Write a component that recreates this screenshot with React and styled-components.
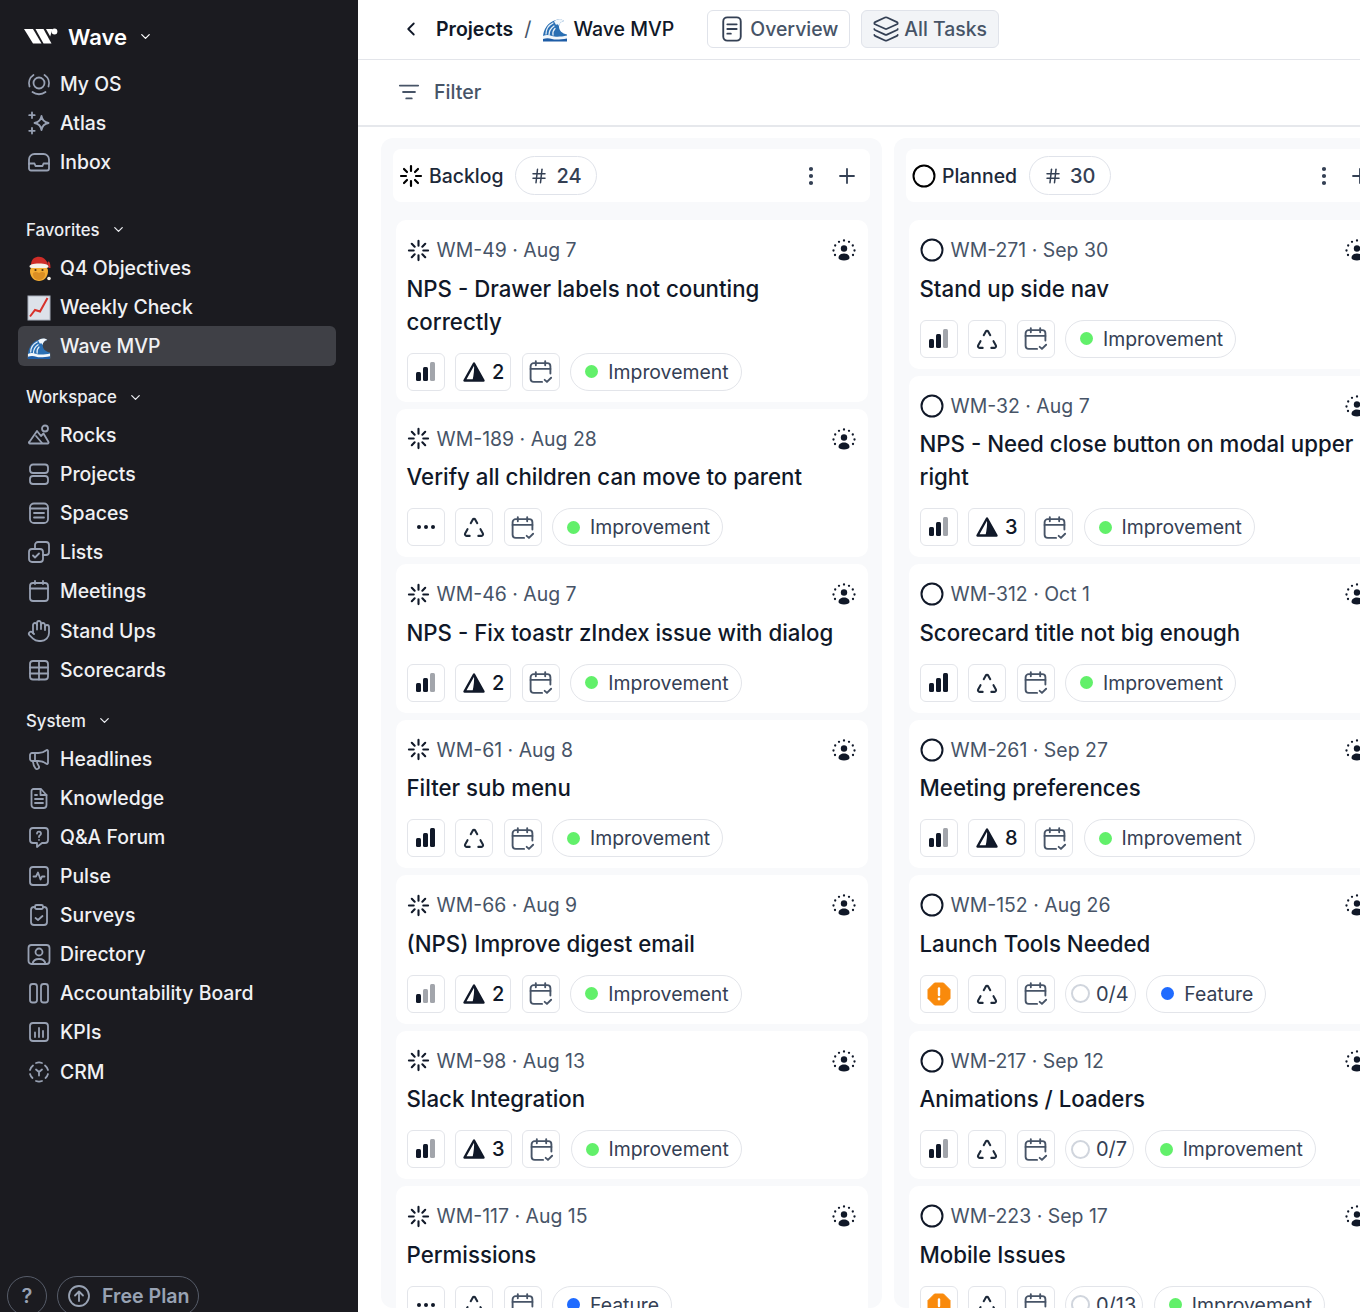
import React from "react";
import styled, { createGlobalStyle } from "styled-components";
import { ChevronDown, ChevronLeft, Plus, Hash, Layers, EllipsisVertical, Hand, Megaphone } from "lucide-react";

const Global = createGlobalStyle`
	html, body { margin: 0; padding: 0; background: #fff; }
	body { font-family: Inter, "Liberation Sans", sans-serif; }
	* { box-sizing: border-box; }
`

const Page = styled.div`
	display: flex;
	width: 1360px;
	height: 1312px;
	overflow: hidden;
	background: #fff;
`

const Sidebar = styled.aside`
	flex: none;
	width: 358px;
	height: 1312px;
	background: #1b1b20;
	display: flex;
	flex-direction: column;
	padding: 17px 22px 0 18px;
	color: #f0f1f4;
`

const Brand = styled.div`
	display: flex;
	align-items: center;
	height: 39px;
	padding-left: 6px;
	font-size: 22px;
	font-weight: 600;
	color: #fff;
	margin-bottom: 8px;
	span { margin: 0 11px 0 10px; }
`

const NavGroup = styled.div`
	display: flex;
	flex-direction: column;
	margin-bottom: ${props => props.$gap || 0}px;
`

const SectionLabel = styled.div`
	display: flex;
	align-items: center;
	height: 37px;
	gap: 11px;
	padding-left: 8px;
	font-size: 16.800px;
	font-weight: 500;
	color: #eceef2;
`

const NavRow = styled.div`
	display: flex;
	align-items: center;
	height: 39.100px;
	padding-left: 9px;
	gap: 9px;
	font-size: 19.400px;
	font-weight: 500;
	border-radius: 6px;
	background: ${props => props.$active ? "#3f4046" : "transparent"};
`

const NavIcon = styled.span`
	flex: none;
	width: 24px;
	height: 24px;
	display: flex;
	color: #98a1b3;
`

const Footer = styled.div`
	margin: auto 0 -4px -11px;
	display: flex;
	gap: 10px;
`

const HelpPill = styled.div`
	width: 40px;
	height: 40px;
	border-radius: 20px;
	border: 1px solid #565c69;
	color: #98a2b3;
	font-size: 20px;
	font-weight: 600;
	display: flex;
	align-items: center;
	justify-content: center;
`

const PlanPill = styled.div`
	width: 142px;
	height: 40px;
	border-radius: 20px;
	border: 1px solid #565c69;
	color: #98a2b3;
	font-size: 19.600px;
	font-weight: 600;
	display: flex;
	align-items: center;
	gap: 11px;
	padding-left: 9px;
`

const Main = styled.main`
	flex: 1;
	min-width: 0;
	display: flex;
	flex-direction: column;
`

const TopBar = styled.header`
	flex: none;
	height: 60px;
	display: flex;
	align-items: center;
	padding: 0 0 2px 42px;
	border-bottom: 1px solid #e3e5ea;
`

const Crumb = styled.span`
	font-size: 19.500px;
	font-weight: ${props => props.$bold ? 600 : 500};
	color: #101828;
	margin-left: ${props => props.$ml}px;
`

const CrumbSep = styled.span`
	font-size: 20px;
	color: #475467;
	margin: 0 11px;
`

const TabButton = styled.div`
	height: 38px;
	width: ${props => props.$w}px;
	margin-left: ${props => props.$ml}px;
	display: flex;
	align-items: center;
	gap: ${props => props.$gap}px;
	padding-left: ${props => props.$pl}px;
	border: 1px solid #e0e3ea;
	border-radius: 6px;
	background: ${props => props.$active ? "#f2f4f7" : "#fff"};
	color: #475467;
	font-size: 19.400px;
	font-weight: 500;
`

const FilterBar = styled.div`
	flex: none;
	height: 67px;
	display: flex;
	align-items: center;
	gap: 14px;
	padding: 0 0 2px 40px;
	border-bottom: 2px solid #e6e8ec;
	color: #475467;
	font-size: 19.600px;
	font-weight: 500;
`

const Board = styled.div`
	flex: none;
	height: 1170px;
	margin-top: 11px;
	padding-left: 23px;
	display: flex;
	gap: 12px;
	overflow: hidden;
`

const Column = styled.section`
	flex: none;
	width: 501px;
	padding: 11px 12px 0;
	border-radius: 12px;
	background: #f8f9fb;
	display: flex;
	flex-direction: column;
	overflow: hidden;
`

const ColumnHead = styled.div`
	flex: none;
	height: 53px;
	margin-bottom: 18px;
	display: flex;
	align-items: center;
	padding: 0 11px 0 6px;
	background: #fff;
	border-radius: 8px;
`

const ColumnTitle = styled.span`
	margin-left: 6px;
	font-size: 19.400px;
	font-weight: 500;
	color: #1d2939;
`

const CountPill = styled.div`
	margin-left: 12px;
	height: 39px;
	padding: 0 14px;
	display: flex;
	align-items: center;
	gap: 8px;
	border: 1px solid #e0e3ea;
	border-radius: 20px;
	font-size: 20px;
	font-weight: 500;
	color: #344054;
`

const HeadActions = styled.div`
	margin-left: auto;
	display: flex;
	align-items: center;
	gap: 12px;
	color: #344054;
`

const Card = styled.article`
	flex: none;
	margin: 0 2px 7px 3px;
	padding: 18px 12px 11px 10.500px;
	background: #fff;
	border-radius: 10px;
`

const Meta = styled.div`
	display: flex;
	align-items: center;
	height: 24px;
	font-size: 19.450px;
	color: #475467;
	span { margin-left: 7px; }
`

const StatusSlot = styled.div`
	display: flex;
	color: #101828;
`

const AvatarSlot = styled.div`
	margin-left: auto;
	display: flex;
`

const Title = styled.h3`
	margin: 9.500px 0 15px;
	font-size: 22.250px;
	line-height: 33px;
	font-weight: 500;
	color: #101828;
`

const Chips = styled.div`
	display: flex;
	align-items: center;
	gap: 10.500px;
`

const Chip = styled.div`
	flex: none;
	height: 38px;
	min-width: 38px;
	padding: 0 ${props => props.$wide ? 6 : 0}px;
	display: flex;
	align-items: center;
	justify-content: center;
	gap: 6px;
	border: 1px solid #e3e5ea;
	border-radius: 6px;
	background: #fff;
	font-size: 20px;
	font-weight: 500;
	color: #101828;
`

const Pill = styled.div`
	flex: none;
	height: 38px;
	display: flex;
	align-items: center;
	gap: ${props => props.$gap}px;
	padding: 0 ${props => props.$pr}px 0 ${props => props.$pl}px;
	border: 1px solid #e3e5ea;
	border-radius: 19px;
	background: #fff;
	font-size: ${props => props.$size}px;
	color: #344054;
`

const Dot = styled.i`
	width: 13px;
	height: 13px;
	border-radius: 50%;
	background: ${props => props.$color};
`

const Ring = styled.i`
	width: 19px;
	height: 19px;
	border-radius: 50%;
	border: 2.500px solid #d0d5dd;
`

const IconTint = styled.span`
	display: flex;
	color: ${props => props.$color};
`

const Svg = ({ size = 24, view = 24, fill = "none", width = 1.8, children }) => (
	<svg width={size} height={size} viewBox={`0 0 ${view} ${view}`} fill={fill} stroke="currentColor" strokeWidth={width} strokeLinecap="round" strokeLinejoin="round">
		{children}
	</svg>
)

const navIcons = {
	os: <Svg><circle cx="12" cy="11" r="5.500" /><path d="M2.500 14.500A10 10 0 0 1 6.500 3M21.500 14.500A10 10 0 0 0 17.500 3M5.500 20a10.500 10.500 0 0 0 13 0" /></Svg>,
	atlas: <Svg><path d="M14.500 5c.6 4.200 2.500 6.200 7 7-4.500.8-6.400 2.800-7 7-.6-4.200-2.500-6.200-7-7 4.500-.8 6.400-2.800 7-7Z" /><path d="M5 1.500v5.500M2.200 4.200h5.500M5 17v5.500M2.200 19.800h5.500" /></Svg>,
	inbox: <Svg><path d="M2 14V9.500a5.500 5.500 0 0 1 5.500-5.500h9A5.500 5.500 0 0 1 22 9.500V14" /><path d="M2 13.500h5.500l1 2.500h7l1-2.500H22v5a2 2 0 0 1-2 2H4a2 2 0 0 1-2-2v-5Z" /></Svg>,
	rocks: <Svg><circle cx="18" cy="5.500" r="3" /><path d="M2 19.500 10 8l4 5 2.500-2.500 5 8.500a1 1 0 0 1-1 1.500H3a1 1 0 0 1-1-1.500Z" /><path d="M9 13l6 7" /></Svg>,
	projects: <Svg><rect x="3" y="2.500" width="18" height="8.500" rx="3" /><rect x="3" y="14" width="18" height="8" rx="3" /></Svg>,
	spaces: <Svg><rect x="3" y="2.500" width="18" height="19.500" rx="4" /><path d="M3 7.500h18M7 12h10M7 16.500h10" /></Svg>,
	lists: <Svg><rect x="2" y="9" width="14" height="13" rx="3" /><path d="M8 9V5a3 3 0 0 1 3-3h8a3 3 0 0 1 3 3v7a3 3 0 0 1-3 3h-3" /><path d="m6 15.500 2 2 4-4" /></Svg>,
	meetings: <Svg><rect x="3" y="4" width="18" height="18" rx="3" /><path d="M3 9.500h18M8 2v3M16 2v3" /></Svg>,
	hand: <Hand size={24} strokeWidth={1.8} />,
	scorecards: <Svg><rect x="3" y="3" width="18" height="18.500" rx="3" /><path d="M3 9.500h18M3 15.500h18M12 3v18.500" /></Svg>,
	headlines: <Megaphone size={24} strokeWidth={1.8} />,
	knowledge: <Svg><path d="M6.500 3H14l5.500 6v10a3 3 0 0 1-3 3h-9a3 3 0 0 1-3-3V5a2 2 0 0 1 2-2Z" /><path d="M13.500 3v6h6M8 13h8M8 17h8M8 9h2" /></Svg>,
	forum: <Svg><path d="M6 3h12a3 3 0 0 1 3 3v9a3 3 0 0 1-3 3h-3l-5 4v-4H6a3 3 0 0 1-3-3V6a3 3 0 0 1 3-3Z" /><path d="M10 8.500a2 2 0 1 1 3 1.800c-.7.4-1 .9-1 1.700M12 14.800v.1" /></Svg>,
	pulse: <Svg><rect x="3" y="3" width="18" height="18" rx="3" /><path d="M6.500 12.500H9l2-4 2.500 7 1.500-3h2.500" /></Svg>,
	surveys: <Svg><rect x="8" y="2" width="8" height="4" rx="1.500" /><path d="M8 4H7a3 3 0 0 0-3 3v12a3 3 0 0 0 3 3h10a3 3 0 0 0 3-3V7a3 3 0 0 0-3-3h-1" /><path d="m8.500 15 2.500 2 4.500-4" /></Svg>,
	directory: <Svg><rect x="1.500" y="3" width="21" height="19" rx="3" /><circle cx="12" cy="10" r="3.500" /><path d="M5.500 22c.5-3.500 3-5 6.500-5s6 1.500 6.500 5" /></Svg>,
	board: <Svg><rect x="3" y="3" width="7" height="18.500" rx="2.500" /><rect x="14" y="3" width="7" height="18.500" rx="2.500" /></Svg>,
	kpis: <Svg><rect x="3" y="3" width="18" height="18" rx="3" /><path d="M8 12.500V17M12 8v9M16 11v6" /></Svg>,
	crm: <Svg><path d="M9 3a9 9 0 0 1 6 0M18 5.500a9 9 0 0 1 3 4.500M21 14a9 9 0 0 1-2.500 4M15 21a9 9 0 0 1-6 0M5.500 18A9 9 0 0 1 3 14M3 10a9 9 0 0 1 3-4.500" /><path d="m9 9.500 3 2.500 3-2.500M12 12v3.500" /></Svg>,
}

const WaveLogo = () => (
	<svg width="34" height="17" viewBox="0 0 34 17" fill="#fff">
		<path d="M0 1h9l8.500 14.500H9Z" />
		<path d="M11.500 1h8l8 14.500h-8Z" />
		<path d="M22 1h6.500l-2.300 7.500Z" />
		<circle cx="30.500" cy="3.500" r="2.900" />
	</svg>
)

const WaveEmoji = ({ size = 26 }) => (
	<svg width={size} height={size} viewBox="0 0 26 26">
		<path d="M1 22c0-9 5-16 13-18 3-.8 6-.5 8 1-3 .5-5 2.500-5 5.500 0 4 3 7 8 8v6H1Z" fill="#2a6fb3" />
		<path d="M12 5.500c3-2.500 7-3 10-.5-3 .5-5 2.500-5 5.500-.4-2-2-3-3-1.500-.6-1.500-1.500-2.500-2-3.500Z" fill="#f2f7fb" />
		<path d="M4 18c0-5 3-9 7-11M7 19c0-4 2-7 5-9M11 19c-.5-3 .5-5 2-6.500" stroke="#e8f1f9" strokeWidth="1.300" fill="none" strokeLinecap="round" />
		<path d="M1 20c3-1.500 6-1 9 0s9 1 15-.5V25H1Z" fill="#f2f7fb" />
		<path d="M1 23c3-1 6-1 9 0s9 .5 15-.5V25.500H1Z" fill="#1e5da6" />
	</svg>
)

const SantaEmoji = () => (
	<svg width="24" height="26" viewBox="0 0 24 26">
		<path d="M3 15c0-4 4-6 9-6s9 2 9 6c0 6-4 10-9 10s-9-4-9-10Z" fill="#f5ae34" />
		<path d="M4 9C4 3 8 .8 12 .8S20 4 21 9Z" fill="#cf2d28" />
		<path d="M21 6c1.500 1.500 1.500 3 1.500 6" stroke="#cf2d28" strokeWidth="2" fill="none" />
		<path d="M2.500 10.500C2.500 8.500 6 7.500 12 7.500s9.500 1 9.500 3-3 1.500-9.500 1.500-9.500.5-9.500-1.500Z" fill="#f6f1e7" />
		<path d="M6 17c2-1.500 4-1 6 0 2-1 4-1.500 6 0 .5 4-2 7-6 7s-6.500-3-6-7Z" fill="#db8f24" />
		<circle cx="8.500" cy="14" r="1.100" fill="#4f3212" />
		<circle cx="15.500" cy="14" r="1.100" fill="#4f3212" />
		<circle cx="22" cy="22.500" r="1.800" fill="#f6f1e7" />
	</svg>
)

const ChartEmoji = () => (
	<svg width="24" height="26" viewBox="0 0 24 26">
		<rect x="1" y="1" width="22" height="24" fill="#dde2ea" stroke="#a9b0bb" strokeWidth="1" />
		<path d="M3 21.500 8 15l5 1.500L20.500 3" stroke="#d8322b" strokeWidth="2" fill="none" />
	</svg>
)

const Spinner = ({ size = 24 }) => (
	<Svg size={size} width={2.200}>
		<path d="M12 2v5M12 17v5M2 12h5M17 12h5M5 5l3 3M16 16l3 3M5 19l3-3M16 8l3-3" />
	</Svg>
)

const StatusIcon = ({ open }) => open
	? <Svg size={24} width={2}><circle cx="12" cy="12" r="10.500" /></Svg>
	: <Spinner size={23} />

const Avatar = () => (
	<svg width="24" height="24" viewBox="0 0 24 24" fill="#101828">
		<circle cx="12" cy="10.500" r="3.200" />
		<path d="M6.500 20c0-3 2.500-4.500 5.500-4.500s5.500 1.500 5.500 4.500c0 1.500-2.500 2.500-5.500 2.500s-5.500-1-5.500-2.500Z" />
		{[[12, 2.500], [7, 3.800], [17, 3.800], [3.200, 7.500], [20.800, 7.500], [1.500, 12.500], [22.500, 12.500], [3, 17], [21, 17]].map(([cx, cy]) => (
			<circle key={`${cx}-${cy}`} cx={cx} cy={cy} r="1.150" />
		))}
	</svg>
)

const Bars = ({ level }) => (
	<svg width="20" height="20" viewBox="0 0 20 20">
		{[[0, 10, 9], [7, 5, 14], [14, 0, 19]].map(([x, y, h], i) => (
			<rect key={x} x={x} y={y} width="5" height={h} rx="1.500" fill={i < level ? "#101828" : "#a2a5ab"} />
		))}
	</svg>
)

const Dots = () => (
	<svg width="20" height="6" viewBox="0 0 20 6" fill="#101828">
		<circle cx="3" cy="3" r="2" /><circle cx="10" cy="3" r="2" /><circle cx="17" cy="3" r="2" />
	</svg>
)

const Urgent = () => (
	<svg width="24" height="24" viewBox="0 0 24 24">
		<path d="M7.500 1h9L23 7.500v9L16.500 23h-9L1 16.500v-9Z" fill="#f98a0c" stroke="#f98a0c" strokeLinejoin="round" strokeWidth="1" />
		<path d="M12 6.500v6.500" stroke="#fff" strokeWidth="2.400" strokeLinecap="round" />
		<circle cx="12" cy="17" r="1.400" fill="#fff" />
	</svg>
)

const Cycle = () => (
	<IconTint $color="#1d2939">
		<Svg size={26} width={1.900}>
			<path d="M9 8.500 10.800 5.200a1.400 1.400 0 0 1 2.400 0L15 8.500M6 14l-2.200 4a1.500 1.500 0 0 0 1.300 2.200H8M18 14l2.200 4a1.500 1.500 0 0 1-1.300 2.200H16" />
		</Svg>
	</IconTint>
)

const CalendarCheck = () => (
	<IconTint $color="#475467">
		<Svg size={25} width={1.800}>
			<path d="M21.500 14V7a3 3 0 0 0-3-3h-13a3 3 0 0 0-3 3v12a3 3 0 0 0 3 3h8" />
			<path d="M2.500 9.500h19M7.500 2v4M16.500 2v4M16 20l2.200 2 4-4" />
		</Svg>
	</IconTint>
)

const Warning = () => (
	<svg width="24" height="22" viewBox="0 0 24 22">
		<path d="M12 2.500 2.500 19.500h19Z" fill="#fff" stroke="#101828" strokeWidth="2.400" strokeLinejoin="round" />
		<path d="M12 3 21.500 19.500H10.500C11.800 14 12.400 8 12 3Z" fill="#101828" />
	</svg>
)

const sections = [
	{ rows: [["os", "My OS"], ["atlas", "Atlas"], ["inbox", "Inbox"]], gap: 30 },
	{ label: "Favorites", rows: [["santa", "Q4 Objectives"], ["chart", "Weekly Check"], ["wave", "Wave MVP", true]], gap: 13 },
	{ label: "Workspace", rows: [["rocks", "Rocks"], ["projects", "Projects"], ["spaces", "Spaces"], ["lists", "Lists"], ["meetings", "Meetings"], ["hand", "Stand Ups"], ["scorecards", "Scorecards"]], gap: 13 },
	{ label: "System", rows: [["headlines", "Headlines"], ["knowledge", "Knowledge"], ["forum", "Q&A Forum"], ["pulse", "Pulse"], ["surveys", "Surveys"], ["directory", "Directory"], ["board", "Accountability Board"], ["kpis", "KPIs"], ["crm", "CRM"]] },
]

const emojiIcons = { santa: <SantaEmoji />, chart: <ChartEmoji />, wave: <WaveEmoji size={27} /> }

const I = "Improvement"
const F = "Feature"

const columns = [
	{
		name: "Backlog", count: 24, open: false,
		cards: [
			{ id: "WM-49", date: "Aug 7", title: "NPS - Drawer labels not counting correctly", bars: 2, warn: 2, tag: I },
			{ id: "WM-189", date: "Aug 28", title: "Verify all children can move to parent", tag: I },
			{ id: "WM-46", date: "Aug 7", title: "NPS - Fix toastr zIndex issue with dialog", bars: 2, warn: 2, tag: I },
			{ id: "WM-61", date: "Aug 8", title: "Filter sub menu", bars: 3, tag: I },
			{ id: "WM-66", date: "Aug 9", title: "(NPS) Improve digest email", bars: 1, warn: 2, tag: I },
			{ id: "WM-98", date: "Aug 13", title: "Slack Integration", bars: 2, warn: 3, tag: I },
			{ id: "WM-117", date: "Aug 15", title: "Permissions", tag: F },
		],
	},
	{
		name: "Planned", count: 30, open: true,
		cards: [
			{ id: "WM-271", date: "Sep 30", title: "Stand up side nav", bars: 2, tag: I },
			{ id: "WM-32", date: "Aug 7", title: "NPS - Need close button on modal upper right", bars: 2, warn: 3, tag: I },
			{ id: "WM-312", date: "Oct 1", title: "Scorecard title not big enough", bars: 3, tag: I },
			{ id: "WM-261", date: "Sep 27", title: "Meeting preferences", bars: 2, warn: 8, tag: I },
			{ id: "WM-152", date: "Aug 26", title: "Launch Tools Needed", urgent: true, progress: "0/4", tag: F },
			{ id: "WM-217", date: "Sep 12", title: "Animations / Loaders", bars: 2, progress: "0/7", tag: I },
			{ id: "WM-223", date: "Sep 17", title: "Mobile Issues", urgent: true, progress: "0/13", tag: I },
		],
	},
]

const TaskCard = ({ card, open }) => (
	<Card>
		<Meta>
			<StatusSlot><StatusIcon open={open} /></StatusSlot>
			<span>{card.id} · {card.date}</span>
			<AvatarSlot><Avatar /></AvatarSlot>
		</Meta>
		<Title>{card.title}</Title>
		<Chips>
			<Chip>{card.urgent ? <Urgent /> : card.bars ? <Bars level={card.bars} /> : <Dots />}</Chip>
			{card.warn
				? <Chip $wide><Warning />{card.warn}</Chip>
				: <Chip><Cycle /></Chip>}
			<Chip><CalendarCheck /></Chip>
			{card.progress && <Pill $size={20} $gap={6} $pl={5} $pr={6}><Ring />{card.progress}</Pill>}
			<Pill $size={19.400} $gap={10} $pl={14} $pr={12}><Dot $color={card.tag === F ? "#1f6bff" : "#62f06a"} />{card.tag}</Pill>
		</Chips>
	</Card>
)

export default function App() {
	return (
		<Page>
			<Global />
			<Sidebar>
				<Brand><WaveLogo /><span>Wave</span><ChevronDown size={15} strokeWidth={2} /></Brand>
				{sections.map((section, i) => (
					<NavGroup key={i} $gap={section.gap}>
						{section.label && <SectionLabel>{section.label}<ChevronDown size={15} strokeWidth={2} /></SectionLabel>}
						{section.rows.map(([icon, text, active]) => (
							<NavRow key={text} $active={active}>
								<NavIcon>{emojiIcons[icon] || navIcons[icon]}</NavIcon>
								{text}
							</NavRow>
						))}
					</NavGroup>
				))}
				<Footer>
					<HelpPill>?</HelpPill>
					<PlanPill>
						<Svg size={24} width={1.800}><circle cx="12" cy="12" r="10" /><path d="M12 17V8M8 11.500 12 7.500l4 4" /></Svg>
						Free Plan
					</PlanPill>
				</Footer>
			</Sidebar>
			<Main>
				<TopBar>
					<ChevronLeft size={22} strokeWidth={2} color="#101828" />
					<Crumb $bold $ml={14}>Projects</Crumb>
					<CrumbSep>/</CrumbSep>
					<WaveEmoji />
					<Crumb $ml={5}>Wave MVP</Crumb>
					<TabButton $w={143} $ml={33} $pl={10} $gap={4}>
						<IconTint $color="#344054">
							<Svg size={28} width={1.600}><rect x="4.500" y="2" width="15" height="20" rx="3.500" /><path d="M8 8h8M8 12h8M8 16h3" /></Svg>
						</IconTint>
						Overview
					</TabButton>
					<TabButton $w={138} $ml={11} $pl={10} $gap={4} $active>
						<Layers size={28} strokeWidth={1.500} color="#344054" />
						All Tasks
					</TabButton>
				</TopBar>
				<FilterBar>
					<Svg size={22} width={2}><path d="M2 5h20M5.500 12h13M9 19h6" /></Svg>
					Filter
				</FilterBar>
				<Board>
					{columns.map(column => (
						<Column key={column.name}>
							<ColumnHead>
								{column.open ? <StatusIcon open /> : <Spinner />}
								<ColumnTitle>{column.name}</ColumnTitle>
								<CountPill><Hash size={18} strokeWidth={2} />{column.count}</CountPill>
								<HeadActions>
									<EllipsisVertical size={24} strokeWidth={2.200} />
									<Plus size={24} strokeWidth={1.800} />
								</HeadActions>
							</ColumnHead>
							{column.cards.map(card => <TaskCard key={card.id} card={card} open={column.open} />)}
						</Column>
					))}
				</Board>
			</Main>
		</Page>
	);
}
